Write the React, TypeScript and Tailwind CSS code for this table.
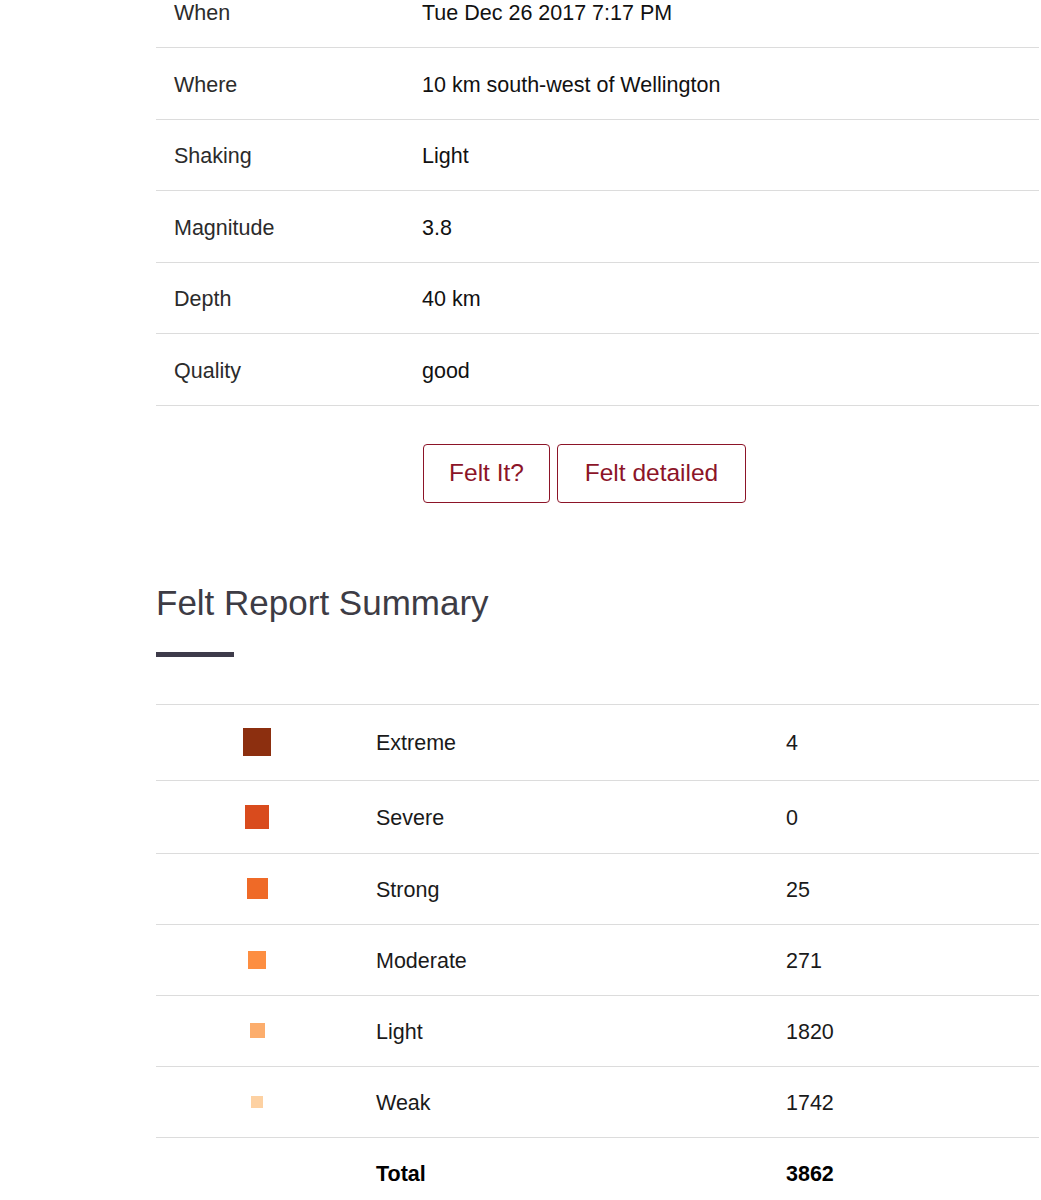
const details = [
  { label: "When", value: "Tue Dec 26 2017 7:17 PM" },
  { label: "Where", value: "10 km south-west of Wellington" },
  { label: "Shaking", value: "Light" },
  { label: "Magnitude", value: "3.8" },
  { label: "Depth", value: "40 km" },
  { label: "Quality", value: "good" },
]

const felt = [
  { label: "Extreme", count: 4, color: "bg-[#8c2f0f]", size: "size-[28px]", row: "h-[76px]" },
  { label: "Severe", count: 0, color: "bg-[#d94b1d]", size: "size-[24px]", row: "h-[73px]" },
  { label: "Strong", count: 25, color: "bg-[#ef6a27]", size: "size-[21px]", row: "h-[71px]" },
  { label: "Moderate", count: 271, color: "bg-[#fd8e41]", size: "size-[18px]", row: "h-[71px]" },
  { label: "Light", count: 1820, color: "bg-[#fcad6c]", size: "size-[15px]", row: "h-[71px]" },
  { label: "Weak", count: 1742, color: "bg-[#fdd1a2]", size: "size-[12px]", row: "h-[71px]" },
]

export default function App() {
  return (
    <div className="h-[1200px] overflow-hidden bg-white font-[family-name:'Liberation_Sans',Arial,sans-serif]">
      <div className="-mt-[24px] ml-[156px] w-[883px]">
        <table className="w-full border-collapse text-[21.5px]">
          <tbody>
            {details.map((d) => (
              <tr key={d.label} className="h-[71.5px] border-b border-[#dcdcdc]">
                <td className="w-[266px] pl-[18px] pt-[3px] text-[#2b2b2b]">{d.label}</td>
                <td className="pt-[3px] text-[#111]">{d.value}</td>
              </tr>
            ))}
          </tbody>
        </table>

        <div className="mt-[38px] flex gap-[7px] pl-[267px]">
          <button className="flex h-[59px] w-[127px] items-center justify-center rounded-[4px] border border-[#8c1428] text-[24.5px] text-[#8c1428]">
            Felt It?
          </button>
          <button className="flex h-[59px] w-[189px] items-center justify-center rounded-[4px] border border-[#8c1428] text-[24.5px] text-[#8c1428]">
            Felt detailed
          </button>
        </div>

        <h2 className="mt-[80px] text-[35px] leading-[40px] text-[#3d3c45]">Felt Report Summary</h2>
        <div className="mt-[29px] h-[5px] w-[78px] bg-[#3d3b4a]" />

        <table className="mt-[47px] w-full border-collapse border-t border-[#dcdcdc] text-[21.5px] text-[#1a1a1a]">
          <tbody>
            {felt.map((f) => (
              <tr key={f.label} className={`${f.row} border-b border-[#dcdcdc]`}>
                <td className="w-[202px]">
                  <div className="flex justify-center">
                    <span className={`${f.color} ${f.size} block`} />
                  </div>
                </td>
                <td className="w-[410px] pl-[18px] pt-[3px]">{f.label}</td>
                <td className="pl-[18px] pt-[3px]">{f.count}</td>
              </tr>
            ))}
            <tr className="h-[71px] font-bold text-black">
              <td />
              <td className="pl-[18px] pt-[3px]">Total</td>
              <td className="pl-[18px] pt-[3px]">3862</td>
            </tr>
          </tbody>
        </table>
      </div>
    </div>
  )
}
